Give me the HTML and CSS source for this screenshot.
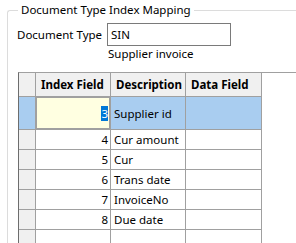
FILE: index.html
```html
<!DOCTYPE html>
<html lang="en">
<head>
  <meta charset="UTF-8" />
  <title>Document Type Index Mapping</title>
  <link rel="stylesheet" href="styles.css">
</head>
<body>
  <fieldset class="group">
    <legend>Document Type Index Mapping</legend>
    <div class="doc-row">
      <label class="doc-label" for="docType">Document Type</label>
      <input class="doc-input" id="docType" type="text" value="SIN"/>
    </div>
    <div class="doc-desc">Supplier invoice</div>

    <div class="grid-wrap">
      <table class="grid">
        <colgroup>
          <col class="c-head"/>
          <col class="c-index"/>
          <col class="c-desc"/>
          <col class="c-data"/>
        </colgroup>
        <thead>
          <tr>
            <th class="row-head"></th>
            <th>Index Field</th>
            <th>Description</th>
            <th>Data Field</th>
          </tr>
        </thead>
        <tbody>
          <tr class="selected">
            <td class="row-head"></td>
            <td class="num editing"><span class="sel-text">3</span></td>
            <td>Supplier id</td>
            <td></td>
          </tr>
          <tr>
            <td class="row-head"></td>
            <td class="num">4</td>
            <td>Cur amount</td>
            <td></td>
          </tr>
          <tr>
            <td class="row-head"></td>
            <td class="num">5</td>
            <td>Cur</td>
            <td></td>
          </tr>
          <tr>
            <td class="row-head"></td>
            <td class="num">6</td>
            <td>Trans date</td>
            <td></td>
          </tr>
          <tr>
            <td class="row-head"></td>
            <td class="num">7</td>
            <td>InvoiceNo</td>
            <td></td>
          </tr>
          <tr>
            <td class="row-head"></td>
            <td class="num">8</td>
            <td>Due date</td>
            <td></td>
          </tr>
          <tr class="new-row">
            <td class="row-head"></td>
            <td></td>
            <td></td>
            <td></td>
          </tr>
        </tbody>
      </table>
    </div>
  </fieldset>
</body>
</html>
```

FILE: styles.css
```css
html, body {
  margin: 0;
  height: 100%;
  overflow: hidden;
  background: #fff;
}
body {
  font-family: "Noto Sans", sans-serif;
  font-size: 11.5px;
  color: #000;
}
.group {
  box-sizing: border-box;
  margin: 2px 0 0 7px;
  padding: 0 0 0 9px;
  height: 241px;
  border: 1px solid #dcdcdc;
  border-right: none;
  border-bottom: none;
  border-radius: 3px 0 0 0;
}
.group legend {
  margin-left: 1px;
  padding: 0 3px;
  line-height: 16px;
}
.doc-row {
  display: flex;
  align-items: center;
  margin-top: 5px;
}
.doc-label {
  width: 90px;
}
.doc-input {
  box-sizing: border-box;
  width: 124px;
  height: 23px;
  margin: 0;
  padding: 0 3px;
  border: 1px solid #7a7a7a;
  font: inherit;
  outline: none;
}
.doc-desc {
  margin-left: 91px;
  line-height: 16px;
}
.grid-wrap {
  margin: 10px 0 0 1px;
  border-top: 1px solid #a0a0a0;
  border-left: 1px solid #6d6d6d;
}
.grid {
  border-collapse: separate;
  border-spacing: 0;
  table-layout: fixed;
  width: 243px;
}
.c-head { width: 17px; }
.c-index { width: 75px; }
.c-desc { width: 75px; }
.c-data { width: 76px; }
.grid th, .grid td {
  box-sizing: border-box;
  border-right: 1px solid #a0a0a0;
  border-bottom: 1px solid #a0a0a0;
  padding: 0 3px;
  height: 20px;
  white-space: nowrap;
  overflow: hidden;
  text-align: left;
  vertical-align: middle;
}
.grid th {
  height: 24px;
  padding-left: 5px;
  background: #f0f0f0;
  font-weight: bold;
}
.grid .row-head {
  background: #f0f0f0;
  padding: 0;
}
.grid .num {
  text-align: right;
  padding-right: 2px;
}
.selected td {
  height: 33px;
  background: #a9cdf0;
}
.selected td.row-head {
  background: #a9cdf0;
}
.selected td.editing {
  background: #ffffe1;
  box-shadow: inset 0 0 0 1px #a0a0a0;
}
.sel-text {
  background: #0078d7;
  color: #fff;
}
.grid .new-row td {
  height: 13px;
  border-bottom: none;
}
```
